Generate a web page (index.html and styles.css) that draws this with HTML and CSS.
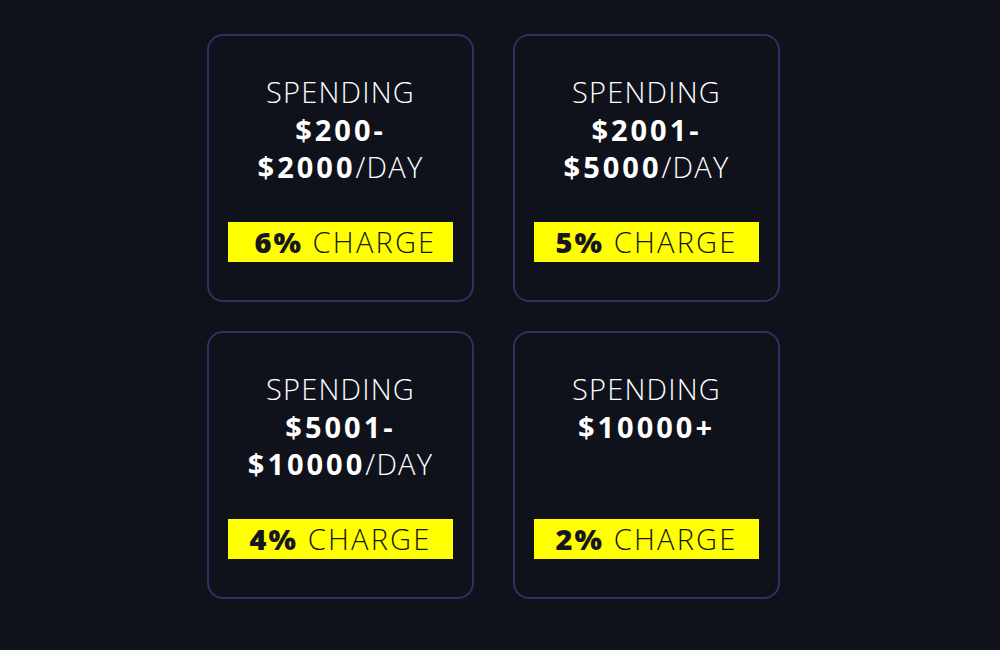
FILE: index.html
```html
<!DOCTYPE html>
<html>
<head>
<meta charset="utf-8">
<link rel="stylesheet" href="styles.css">
</head>
<body>
<div class="grid">
  <div class="card">
    <div class="title">SPENDING<br><b>$200-<br>$2000</b>/DAY</div>
    <div class="charge">&nbsp;<b>6%</b> CHARGE</div>
  </div>
  <div class="card">
    <div class="title">SPENDING<br><b>$2001-<br>$5000</b>/DAY</div>
    <div class="charge"><b>5%</b> CHARGE</div>
  </div>
  <div class="card">
    <div class="title">SPENDING<br><b>$5001-<br>$10000</b>/DAY</div>
    <div class="charge"><b>4%</b> CHARGE</div>
  </div>
  <div class="card">
    <div class="title">SPENDING<br><b>$10000+</b></div>
    <div class="charge"><b>2%</b> CHARGE</div>
  </div>
</div>
</body>
</html>
```

FILE: styles.css
```css
html, body {
  margin: 0;
  padding: 0;
  background: #0f111b;
}
body {
  font-family: "Open Sans", "Liberation Sans", sans-serif;
  color: #ffffff;
}
.grid {
  display: grid;
  grid-template-columns: 267px 267px;
  grid-auto-rows: 268px;
  column-gap: 39px;
  row-gap: 29px;
  padding: 34px 0 0 207px;
}
.card {
  box-sizing: border-box;
  border: 2px solid #2c3362;
  border-radius: 16px;
  background: #0f111b;
  display: flex;
  flex-direction: column;
  align-items: center;
  padding: 37px 19px 38px;
}
.title {
  font-size: 29px;
  font-weight: 300;
  line-height: 37.5px;
  letter-spacing: 1.2px;
  text-align: center;
}
.title b {
  font-weight: 700;
  letter-spacing: 3px;
}
.charge {
  margin-top: auto;
  align-self: stretch;
  height: 40px;
  background: #ffff00;
  color: #15161f;
  font-size: 29px;
  font-weight: 300;
  line-height: 40px;
  letter-spacing: 2.2px;
  text-align: center;
}
.charge b {
  font-weight: 800;
  letter-spacing: 2px;
}
```
